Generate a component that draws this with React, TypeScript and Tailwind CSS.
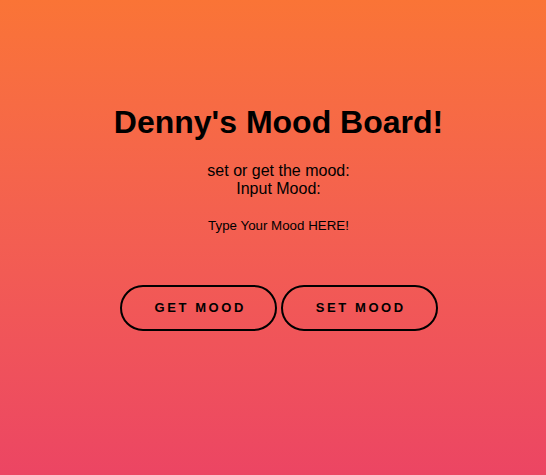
export default function App() {
  return (
    <div className="min-h-screen bg-gradient-to-b from-[#fa7436] to-[#ec4563] pl-[11px] font-['Liberation_Sans',Arial,sans-serif] text-black">
      <div className="flex flex-col items-center pt-[104px]">
        <h1 className="text-[32px] font-bold leading-[37px]">
          Denny's Mood Board!
        </h1>
        <p className="mt-[21px] text-center text-base leading-[18px]">
          set or get the mood:
          <br />
          Input Mood:
        </p>
        <input
          type="text"
          placeholder="Type Your Mood HERE!"
          className="mt-[20px] h-[15px] w-[200px] border-0 bg-transparent p-0 text-center text-[13.33px] leading-[15px] outline-none placeholder:text-black"
        />
        <div className="mt-[52px] flex gap-[3.5px] pl-[1px]">
          <button className="flex h-[46px] w-[157px] items-center justify-center rounded-full border-2 border-black pl-[3px] text-[13px] font-bold tracking-[0.2em]">
            GET MOOD
          </button>
          <button className="flex h-[46px] w-[157px] items-center justify-center rounded-full border-2 border-black pl-[3px] text-[13px] font-bold tracking-[0.2em]">
            SET MOOD
          </button>
        </div>
      </div>
    </div>
  );
}
